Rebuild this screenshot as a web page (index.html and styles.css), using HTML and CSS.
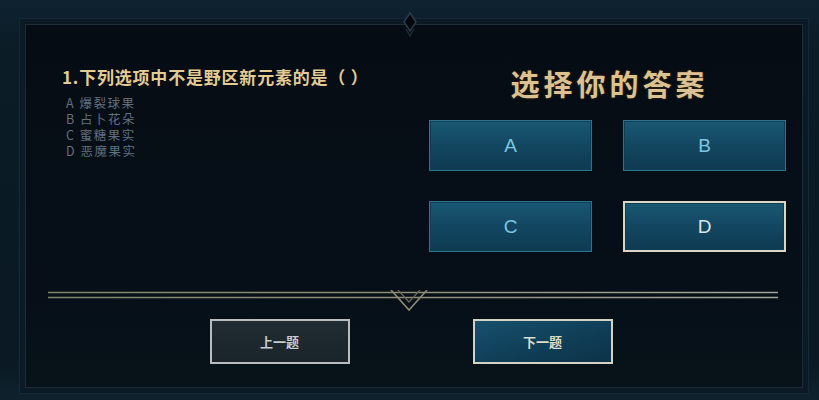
FILE: index.html
```html
<!DOCTYPE html>
<html lang="zh-CN">
<head>
    <meta charset="UTF-8">
    <title>选择你的答案</title>
    <link rel="stylesheet" href="styles.css">
</head>
<body>
    <div class="frame">
        <svg class="top-gem" width="16" height="26" viewBox="0 0 16 26">
            <path d="M8 1 L14 10 L8 19 L2 10 Z" fill="#02070c" stroke="#2b3e4a" stroke-width="1.5"/>
            <path d="M4 17 L8 24 L12 17" fill="none" stroke="#22343f" stroke-width="1.2"/>
        </svg>
        <div class="panel">
            <div class="quiz">
                <div class="question">
                    <p class="q-title">1.下列选项中不是野区新元素的是（ ）</p>
                    <ul class="options">
                        <li>A 爆裂球果</li>
                        <li>B 占卜花朵</li>
                        <li>C 蜜糖果实</li>
                        <li>D 恶魔果实</li>
                    </ul>
                </div>
                <div class="answers">
                    <h2 class="a-title">选择你的答案</h2>
                    <div class="answer-grid">
                        <button class="answer">A</button>
                        <button class="answer">B</button>
                        <button class="answer">C</button>
                        <button class="answer selected">D</button>
                    </div>
                </div>
            </div>

            <svg class="divider" width="730" height="24" viewBox="0 0 730 24">
                <defs>
                    <linearGradient id="line" x1="0" x2="1" y1="0" y2="0">
                        <stop offset="0" stop-color="#7d8468"/>
                        <stop offset="0.5" stop-color="#8f8c74"/>
                        <stop offset="1" stop-color="#a2a59b"/>
                    </linearGradient>
                </defs>
                <path d="M0 2.5 H730 M0 7.5 H730" stroke="url(#line)" stroke-width="1.6"/>
                <path d="M343 0 L361 20 L379 0" fill="none" stroke="#8d8a74" stroke-width="1.6"/>
                <path d="M350 0 L361 12 L372 0" fill="none" stroke="#6c6b5a" stroke-width="1.2"/>
            </svg>

            <div class="nav">
                <button class="nav-btn prev">上一题</button>
                <button class="nav-btn next">下一题</button>
            </div>
        </div>
    </div>
</body>
</html>
```

FILE: styles.css
```css
html, body {
    margin: 0;
    padding: 0;
}

body {
    width: 819px;
    height: 400px;
    overflow: hidden;
    background: linear-gradient(to bottom, #0e2230 0%, #0b1c27 12%, #0a1923 90%, #0e222e 100%);
    font-family: "Noto Sans CJK SC", "Liberation Sans", sans-serif;
}

.frame {
    position: relative;
    padding: 24px 16px 0 25px;
}

.top-gem {
    position: absolute;
    left: 402px;
    top: 12px;
}

.panel {
    height: 362px;
    border: 1px solid #1c2c36;
    background: linear-gradient(to bottom, #050c14, #060f18 70%, #071219);
    box-shadow: 0 0 0 5px #0b1a24, 0 0 0 6px #132a36;
    display: flex;
    flex-direction: column;
    align-items: center;
}

.quiz {
    width: 100%;
    display: flex;
    padding-top: 42px;
    box-sizing: border-box;
}

.question {
    width: 403px;
    padding-left: 36px;
    box-sizing: border-box;
}

.q-title {
    margin: 0 0 8px 0;
    font-size: 17px;
    line-height: 20px;
    font-weight: bold;
    color: #e3cb92;
    letter-spacing: 0.8px;
    white-space: nowrap;
}

.options {
    list-style: none;
    margin: 0;
    padding: 0 0 0 4px;
    font-size: 12.5px;
    line-height: 16px;
    letter-spacing: 1.5px;
    color: #5f7180;
}

.answers {
    width: 357px;
}

.a-title {
    margin: 0 0 20px 0;
    text-align: center;
    font-size: 29px;
    line-height: 33px;
    font-weight: bold;
    letter-spacing: 4px;
    text-indent: 4px;
    color: #dcc291;
    text-shadow: 0 0 3px #3a2a10;
}

.answer-grid {
    display: grid;
    grid-template-columns: 163px 163px;
    grid-auto-rows: 51px;
    column-gap: 31px;
    row-gap: 30px;
}

.answer {
    border: 1px solid #2c7390;
    background: linear-gradient(to bottom, #1a5873 0%, #134862 45%, #0e3a52 100%);
    box-shadow: inset 0 0 0 1px #0f3e55;
    color: #7cc6e0;
    font-family: "Liberation Sans", sans-serif;
    font-size: 19px;
    cursor: pointer;
}

.answer.selected {
    border: 2px solid #d9d6c6;
    color: #dce4e6;
}

.divider {
    margin-top: 38px;
    margin-left: -3px;
}

.nav {
    display: flex;
    justify-content: center;
    gap: 123px;
    margin-top: 5px;
    margin-left: -6px;
}

.nav-btn {
    width: 140px;
    height: 45px;
    border: 2px solid #b9bdbd;
    font-family: "Noto Sans CJK SC", sans-serif;
    font-size: 13px;
    font-weight: bold;
    cursor: pointer;
}

.prev {
    background: linear-gradient(to bottom, #222c33, #1a242b);
    color: #c9cbcb;
}

.next {
    border-color: #d4d2c2;
    background: linear-gradient(to bottom right, #17506c, #0f3d56 60%, #0c3247);
    color: #dcdccc;
}
```
